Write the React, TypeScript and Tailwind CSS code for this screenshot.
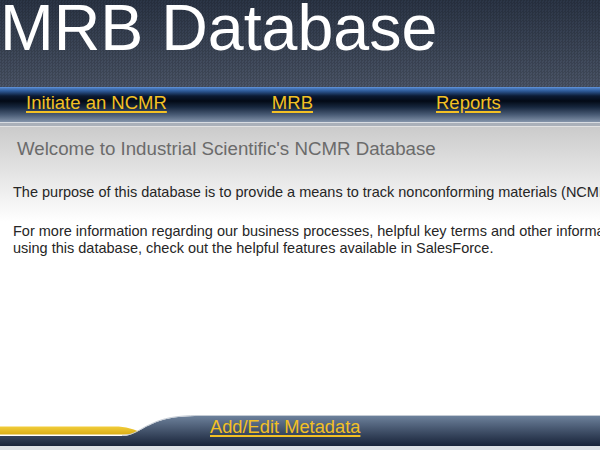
const LINK = "text-[#f3c024] underline decoration-[1.5px] underline-offset-[2px]";

const NAV_LINKS = [
  { label: "Initiate an NCMR", gap: "" },
  { label: "MRB", gap: "ml-[105px]" },
  { label: "Reports", gap: "ml-[123px]" },
];

function FooterSwoosh() {
  return (
    <svg className="h-[31px] w-[200px] shrink-0" viewBox="0 0 200 31" preserveAspectRatio="none">
      <defs>
        <linearGradient id="bar" gradientUnits="userSpaceOnUse" x1="0" y1="1" x2="0" y2="31">
          <stop offset="0" stopColor="#6d819b" />
          <stop offset="1" stopColor="#19243a" />
        </linearGradient>
        <linearGradient id="gold" x1="0" y1="0" x2="0" y2="1">
          <stop offset="0" stopColor="#f2cd3a" />
          <stop offset="1" stopColor="#d9ad16" />
        </linearGradient>
      </defs>
      <path d="M0,11.5 H115 C125,11.5 135,14 145,19.5 H0 Z" fill="url(#gold)" />
      <path d="M0,21 L122,21 C134,21 140,14 150,10 C160,5 172,1 200,1 V31 H0 Z" fill="url(#bar)" />
      <path d="M122,20.5 C134,20.5 140,13.5 150,9.5 C160,4.5 172,0.5 200,0.5" fill="none" stroke="#c5ccd5" strokeWidth="1" />
    </svg>
  );
}

export default function App() {
  return (
    <div className="flex h-screen w-full flex-col overflow-hidden bg-white font-['Liberation_Sans',Arial,sans-serif]">
      <header className="h-[87px] shrink-0 bg-linear-to-b from-[#2b3546] to-[#4b5567]">
        <h1 className="h-full bg-[image:repeating-conic-gradient(rgba(0,0,0,0.14)_0_25%,transparent_0_50%)] bg-size-[3px_3px] text-[64.5px] leading-[57px] text-white">
          MRB Database
        </h1>
      </header>

      <nav className="shrink-0">
        <div className="flex h-[35px] items-start bg-[linear-gradient(to_bottom,#6a9ae0_0px,#4d7fc4_1px,#2e5a98_4px,#0b1a33_9px,#030a16_14px,#16263d_20px,#4b5d77_28px,#8494aa_35px)] pl-[26px] pt-[5px] text-[18.5px] leading-[21px]">
          {NAV_LINKS.map((l) => (
            <a key={l.label} href="#" className={`${LINK} ${l.gap}`}>
              {l.label}
            </a>
          ))}
        </div>
        <div className="h-[5px] bg-[linear-gradient(to_bottom,#d8dce1_0px,#d8dce1_1px,#aab0b9_1px,#aab0b9_4px,#e2e2e2_4px)]" />
      </nav>

      <main className="flex-1 bg-[linear-gradient(to_bottom,#cbcbcb,#ffffff_95px)] pt-[11px]">
        <h2 className="pl-[17px] text-[18.7px] leading-[21px] text-[#6b6b6b]">
          Welcome to Industrial Scientific's NCMR Database
        </h2>
        <div className="whitespace-nowrap pl-[13px] text-[14.5px] leading-[17px] text-[#262626]">
          <p className="mt-[25px]">
            The purpose of this database is to provide a means to track nonconforming materials (NCMRs) through the MRB process.
          </p>
          <p className="mt-[22px]">
            For more information regarding our business processes, helpful key terms and other information about
            <br />
            using this database, check out the helpful features available in SalesForce.
          </p>
        </div>
      </main>

      <footer className="flex h-[31px] shrink-0">
        <FooterSwoosh />
        <div className="flex-1 border-t border-[#c5ccd5] bg-linear-to-b from-[#6d819b] to-[#19243a] pl-[10px] text-[18.3px] leading-[21px]">
          <a href="#" className={LINK}>
            Add/Edit Metadata
          </a>
        </div>
      </footer>
      <div className="h-[4px] shrink-0 bg-[#dde1e6]" />
    </div>
  );
}
